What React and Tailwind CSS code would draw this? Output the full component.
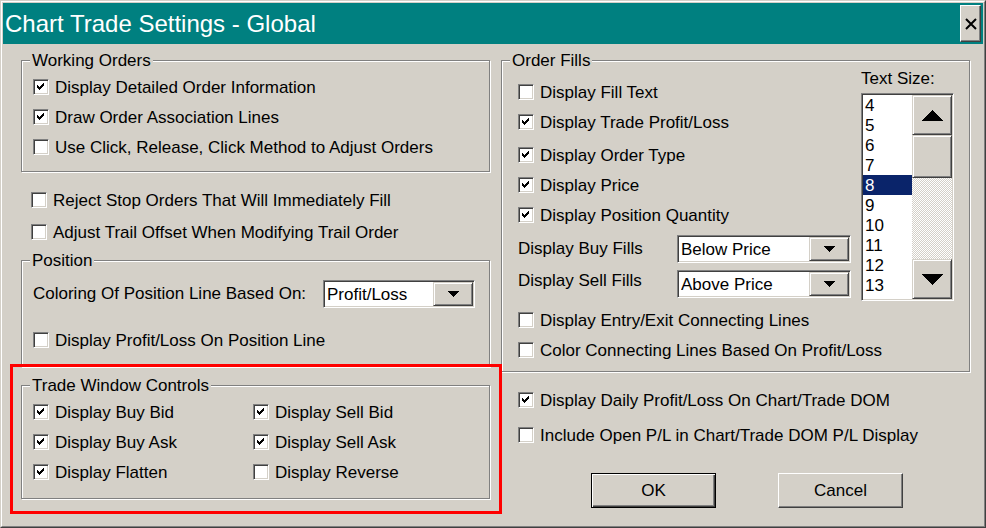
import { useId, useState } from "react";

const SUNKEN =
  "border border-t-[#808080] border-l-[#808080] border-r-white border-b-white shadow-[inset_1px_1px_0_#404040,inset_-1px_-1px_0_#d4d0c8]";
const RAISED =
  "bg-[#d4d0c8] border border-t-[#d4d0c8] border-l-[#d4d0c8] border-r-[#404040] border-b-[#404040] shadow-[inset_1px_1px_0_#fff,inset_-1px_-1px_0_#808080]";

function Check({ label, checked = false, className = "h-[30px]" }) {
  const [on, setOn] = useState(checked);
  return (
    <label className={`flex items-center gap-[6px] whitespace-nowrap ${className}`}>
      <span className="relative flex size-4 shrink-0">
        <input
          type="checkbox"
          checked={on}
          onChange={(e) => setOn(e.target.checked)}
          className={`size-4 appearance-none bg-white ${SUNKEN}`}
        />
        {on && (
          <svg
            viewBox="0 0 16 16"
            shapeRendering="crispEdges"
            className="pointer-events-none absolute inset-0 size-4"
          >
            <path d="M4 6h1v1h1v1h1v-1h1v-1h1v-1h1v-1h1v3h-1v1h-1v1h-1v1h-1v1h-1v-1h-1v-1h-1z" />
          </svg>
        )}
      </span>
      <span className="pt-[2px]">{label}</span>
    </label>
  );
}

function Group({ title, className = "", children }) {
  return (
    <fieldset
      className={`mr-px min-w-0 border border-[#808080] shadow-[inset_1px_1px_0_#fff,1px_1px_0_#fff] ${className}`}
    >
      <legend className="ml-2 bg-[#d4d0c8] px-[2px] leading-[19px]">{title}</legend>
      {children}
    </fieldset>
  );
}

function Dropdown({ id, value, options, className }) {
  return (
    <div className={`relative h-7 ${className}`}>
      <select
        id={id}
        defaultValue={value}
        className={`size-full appearance-none bg-white pt-[2px] pl-[3px] pr-10 ${SUNKEN}`}
      >
        {options.map((o) => (
          <option key={o}>{o}</option>
        ))}
      </select>
      <span
        className={`pointer-events-none absolute inset-y-[2px] right-[2px] flex w-10 items-center justify-center ${RAISED}`}
      >
        <svg viewBox="0 0 11 6" className="h-[6px] w-[11px]" shapeRendering="crispEdges">
          <path d="M0 0h11L5.5 6z" />
        </svg>
      </span>
    </div>
  );
}

function TextSizeList({ id }) {
  return (
    <div className={`flex h-[208px] w-[93px] bg-white p-px ${SUNKEN}`}>
      <select
        id={id}
        size={10}
        defaultValue="8"
        className="h-[204px] min-w-0 flex-1 appearance-none overflow-y-auto border-0 bg-white p-0 outline-none [scrollbar-width:none]"
      >
        {["4", "5", "6", "7", "8", "9", "10", "11", "12", "13"].map((n) => (
          <option
            key={n}
            className="h-5 min-h-5 p-0 pt-px pl-[2px] text-black checked:bg-[linear-gradient(#0a246a,#0a246a)] checked:text-white"
          >
            {n}
          </option>
        ))}
      </select>
      <div className="flex w-10 flex-col bg-[repeating-conic-gradient(#fff_0_25%,#d4d0c8_0_50%)] bg-[length:2px_2px]">
        <button
          type="button"
          aria-label="Scroll up"
          className={`flex h-10 items-center justify-center ${RAISED}`}
        >
          <svg viewBox="0 0 21 11" className="h-[11px] w-[21px]" shapeRendering="crispEdges">
            <path d="M0 11h21L10.5 0z" />
          </svg>
        </button>
        <div className={`h-[43px] ${RAISED}`} />
        <button
          type="button"
          aria-label="Scroll down"
          className={`mt-auto flex h-10 items-center justify-center ${RAISED}`}
        >
          <svg viewBox="0 0 21 11" className="h-[11px] w-[21px]" shapeRendering="crispEdges">
            <path d="M0 0h21L10.5 11z" />
          </svg>
        </button>
      </div>
    </div>
  );
}

export default function App() {
  const id = useId();
  return (
    <div className="border border-t-[#d4d0c8] border-l-[#d4d0c8] border-r-[#404040] border-b-[#404040] bg-[#d4d0c8] font-['Liberation_Sans',Arial,sans-serif] text-[17px] leading-5 text-black">
      <div className="border border-t-white border-l-white border-r-[#808080] border-b-[#808080] p-px">
        <header className="flex h-[41px] items-center justify-between bg-[#008080] pl-[2px] pr-[2px]">
          <h1 className="text-[24px] leading-7 text-white">Chart Trade Settings - Global</h1>
          <button
            type="button"
            aria-label="Close"
            className="flex h-[37px] w-[21px] items-center justify-center border border-t-white border-l-white border-r-[#404040] border-b-[#404040] bg-[#d4d0c8] shadow-[inset_-1px_-1px_0_#808080]"
          >
            <svg viewBox="0 0 12 12" className="size-3" fill="none" stroke="#000" strokeWidth="2">
              <path d="M1 1l10 10M11 1L1 11" />
            </svg>
          </button>
        </header>

        <main className="grid grid-cols-2 gap-[10px] pt-[7px] pr-3 pb-[17px] pl-[18px]">
          <div className="relative">
            <Group title="Working Orders" className="pb-[9px]">
              <div className="pt-[2px] pl-[11px]">
                <Check label="Display Detailed Order Information" checked />
                <Check label="Draw Order Association Lines" checked />
                <Check label="Use Click, Release, Click Method to Adjust Orders" />
              </div>
            </Group>

            <div className="mt-3 mb-[3px] pl-[10px]">
              <Check label="Reject Stop Orders That Will Immediately Fill" className="h-8" />
              <Check label="Adjust Trail Offset When Modifying Trail Order" className="h-8" />
            </div>

            <Group title="Position" className="pb-[11px]">
              <div className="pt-[10px] pl-[11px]">
                <div className="flex items-center pr-[14px]">
                  <label htmlFor={`${id}-color`} className="flex-1 whitespace-nowrap">
                    Coloring Of Position Line Based On:
                  </label>
                  <Dropdown
                    id={`${id}-color`}
                    value="Profit/Loss"
                    options={["Profit/Loss", "Long/Short"]}
                    className="w-[152px]"
                  />
                </div>
                <Check label="Display Profit/Loss On Position Line" className="mt-[17px] h-[30px]" />
              </div>
            </Group>

            <div className="relative mt-[9px]">
              <Group title="Trade Window Controls" className="pb-[11px]">
                <div className="grid grid-cols-[220px_1fr] pt-[2px] pl-[11px]">
                  <Check label="Display Buy Bid" checked />
                  <Check label="Display Sell Bid" checked />
                  <Check label="Display Buy Ask" checked />
                  <Check label="Display Sell Ask" checked />
                  <Check label="Display Flatten" checked />
                  <Check label="Display Reverse" />
                </div>
              </Group>
              <div className="pointer-events-none absolute -top-3 -right-[11px] -bottom-[15px] -left-[11px] border-[3px] border-[#ff0000]" />
            </div>
          </div>

          <div>
            <Group title="Order Fills" className="pb-[6px]">
              <div className="pr-4 pl-4">
                <div className="flex gap-[10px]">
                  <div className="min-w-0 flex-1 pt-[7px]">
                    <Check label="Display Fill Text" />
                    <Check label="Display Trade Profit/Loss" checked />
                    <Check label="Display Order Type" checked className="mt-[3px] h-[30px]" />
                    <Check label="Display Price" checked />
                    <Check label="Display Position Quantity" checked />
                    <div className="mt-[5px] flex justify-between">
                      <div className="flex flex-col gap-3 pt-1 whitespace-nowrap">
                        <label htmlFor={`${id}-buy`}>Display Buy Fills</label>
                        <label htmlFor={`${id}-sell`}>Display Sell Fills</label>
                      </div>
                      <div className="flex flex-col gap-[7px]">
                        <Dropdown
                          id={`${id}-buy`}
                          value="Below Price"
                          options={["Above Price", "Below Price"]}
                          className="w-[174px]"
                        />
                        <Dropdown
                          id={`${id}-sell`}
                          value="Above Price"
                          options={["Above Price", "Below Price"]}
                          className="w-[174px]"
                        />
                      </div>
                    </div>
                  </div>
                  <div className="-mt-px flex w-[92px] flex-col gap-1">
                    <label htmlFor={`${id}-size`} className="whitespace-nowrap">
                      Text Size:
                    </label>
                    <TextSizeList id={`${id}-size`} />
                  </div>
                </div>
                <Check label="Display Entry/Exit Connecting Lines" className="mt-1 h-[30px]" />
                <Check label="Color Connecting Lines Based On Profit/Loss" />
              </div>
            </Group>

            <div className="mt-[13px] pl-[17px]">
              <Check label="Display Daily Profit/Loss On Chart/Trade DOM" checked />
              <Check
                label="Include Open P/L in Chart/Trade DOM P/L Display"
                className="mt-[5px] h-[30px]"
              />
            </div>

            <div className="mt-[23px] flex justify-center gap-[62px] pl-[22px]">
              <button
                type="button"
                className="h-[35px] w-[125px] border border-black bg-[#d4d0c8] shadow-[inset_1px_1px_0_#fff,inset_-1px_-1px_0_#404040,inset_-2px_-2px_0_#808080]"
              >
                OK
              </button>
              <button
                type="button"
                className="h-[35px] w-[125px] border border-t-white border-l-white border-r-[#404040] border-b-[#404040] bg-[#d4d0c8] shadow-[inset_-1px_-1px_0_#808080]"
              >
                Cancel
              </button>
            </div>
          </div>
        </main>
      </div>
    </div>
  );
}
